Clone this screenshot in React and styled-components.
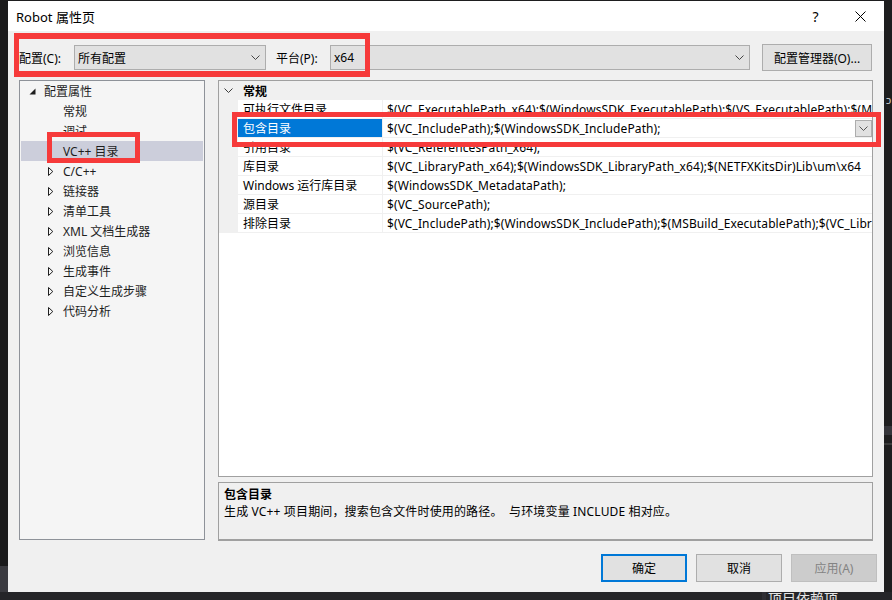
import React from "react";
import styled, { createGlobalStyle } from "styled-components";

const FONT = `"Noto Sans", "Noto Sans CJK SC", sans-serif`;

const GlobalStyle = createGlobalStyle`
  * { box-sizing: border-box; }
  html, body { margin: 0; padding: 0; background: #1e1e1e; overflow: hidden; }
`;

const Desktop = styled.div`
  width: 892px;
  height: 600px;
  display: grid;
  grid-template-columns: 8px 876px 8px;
  grid-template-rows: 592px 8px;
  background: #1e1e1f;
  font-family: ${FONT};
  font-size: 12px;
  color: #000;
`;

const LeftEdge = styled.div`
  grid-column: 1;
  grid-row: 1;
  background: linear-gradient(to bottom, #1b1b1c 0 566px, #3b3b40 566px);
`;

const RightEdge = styled.div`
  grid-column: 3;
  grid-row: 1;
  background: #1e1e1f;
  display: flex;
  flex-direction: column;
  align-items: flex-start;
  padding-top: 94px;
  overflow: hidden;
`;

const EdgeGlyph = styled.span`
  font-size: 11px;
  line-height: 12px;
  color: #cfcfcf;
  padding-left: 2px;
`;

const EdgeBand = styled.div`
  height: ${(p) => p.h}px;
  width: 100%;
  margin-top: ${(p) => p.mt}px;
  background: ${(p) => p.bg};
`;

const BottomStrip = styled.div`
  grid-column: 1 / -1;
  grid-row: 2;
  background: #252528;
  overflow: hidden;
  display: flex;
  align-items: flex-start;
  padding-left: 762px;
`;

const StripSep = styled.div`
  width: 4px;
  height: 8px;
  background: #2e2e33;
  margin-right: 2px;
`;

const StripText = styled.span`
  font-family: "Noto Sans CJK SC", sans-serif;
  font-size: 14px;
  line-height: 14px;
  color: #e6e6e6;
  margin-top: -1px;
`;

const Dialog = styled.div`
  grid-column: 2;
  grid-row: 1;
  margin-top: 1px;
  background: #f0f0f0;
  display: flex;
  flex-direction: column;
  position: relative;
`;

const TitleBar = styled.div`
  height: 30px;
  background: #fff;
  display: flex;
  align-items: center;
  padding-left: 8px;
`;

const Title = styled.span`
  flex: 1;
  font-size: 13px;
  color: #000;
`;

const CaptionButton = styled.div`
  width: 45px;
  height: 30px;
  display: flex;
  align-items: center;
  justify-content: center;
  font-size: 14px;
  color: #000;
  margin-right: ${(p) => (p.last ? 1 : 0)}px;
`;

const ConfigRow = styled.div`
  display: flex;
  align-items: center;
  height: 40px;
  padding: 13px 12px 0 11px;
`;

const FieldLabel = styled.span`
  width: ${(p) => p.w}px;
  flex: none;
  margin-left: ${(p) => p.ml || 0}px;
  white-space: nowrap;
`;

const Combo = styled.div`
  height: 25px;
  width: ${(p) => (p.w ? `${p.w}px` : "auto")};
  flex: ${(p) => (p.w ? "none" : "1")};
  background: #e1e1e1;
  border: 1px solid #adadad;
  display: flex;
  align-items: center;
  justify-content: space-between;
  padding: 0 5px 0 3px;
`;

const ActionButton = styled.div`
  width: 110px;
  height: 27px;
  margin-left: 12px;
  background: #e1e1e1;
  border: 1px solid #adadad;
  display: flex;
  align-items: center;
  justify-content: center;
  white-space: nowrap;
`;

const Main = styled.div`
  display: flex;
  height: 461px;
  margin-top: 9px;
  padding: 0 11px;
`;

const Tree = styled.div`
  width: 186px;
  flex: none;
  height: 460px;
  background: #f5f5f5;
  border: 1px solid #8e9299;
  padding: 0 1px;
`;

const TreeRow = styled.div`
  height: 20px;
  display: flex;
  align-items: center;
  padding-left: ${(p) => 8 + p.level * 19}px;
  background: ${(p) => (p.selected ? "#cccedb" : "transparent")};
  color: #1e1e1e;
  white-space: nowrap;
`;

const Toggle = styled.span`
  width: 15px;
  flex: none;
  display: flex;
  align-items: center;
`;

const PropertyArea = styled.div`
  flex: 1;
  margin-left: 13px;
  display: flex;
  flex-direction: column;
  gap: 5px;
`;

const Grid = styled.div`
  flex: 1;
  background: #fff;
  border: 1px solid #a0a0a0;
  overflow: hidden;
`;

const CategoryRow = styled.div`
  height: 19px;
  display: flex;
  align-items: center;
  background: #f0f0f0;
`;

const Gutter = styled.div`
  width: 19px;
  height: 100%;
  flex: none;
  background: #f0f0f0;
  display: flex;
  align-items: center;
  justify-content: center;
`;

const CategoryName = styled.span`
  font-weight: bold;
  padding-left: 5px;
`;

const PropRow = styled.div`
  height: 19px;
  display: grid;
  grid-template-columns: 19px 145px 1fr;
`;

const NameCell = styled.div`
  display: flex;
  align-items: center;
  padding-left: 5px;
  white-space: nowrap;
  overflow: hidden;
  border-bottom: 1px solid #f0f0f0;
  border-right: 1px solid #f0f0f0;
  background: ${(p) => (p.selected ? "#0078d7" : "#fff")};
  color: ${(p) => (p.selected ? "#fff" : "#000")};
`;

const ValueCell = styled.div`
  display: flex;
  align-items: center;
  padding-left: 4px;
  white-space: nowrap;
  overflow: hidden;
  border-bottom: 1px solid #f0f0f0;
`;

const ValueText = styled.span`
  flex: 1;
  overflow: hidden;
  letter-spacing: 0.1px;
`;

const DropButton = styled.div`
  width: 17px;
  height: 17px;
  flex: none;
  background: #e1e1e1;
  border: 1px solid #adadad;
  display: flex;
  align-items: center;
  justify-content: center;
`;

const Description = styled.div`
  height: 59px;
  flex: none;
  background: #f0f0f0;
  border: 1px solid #a0a0a0;
  border-bottom-width: 2px;
  padding: 3px 5px 0;
  line-height: 17px;
`;

const DescTitle = styled.div`
  font-weight: bold;
`;

const DescText = styled.div`
  white-space: pre;
  letter-spacing: 0.15px;
`;

const ButtonRow = styled.div`
  display: flex;
  justify-content: flex-end;
  gap: 9px;
  padding: 13px 7px 0 0;
`;

const DialogButton = styled.div`
  width: 86px;
  height: 28px;
  display: flex;
  align-items: center;
  justify-content: center;
  background: ${(p) => (p.disabled ? "#cccccc" : "#e1e1e1")};
  border: ${(p) =>
    p.primary ? "2px solid #0078d7" : p.disabled ? "1px solid #bfbfbf" : "1px solid #adadad"};
  color: ${(p) => (p.disabled ? "#838383" : "#000")};
`;

const RedBox = styled.div`
  position: absolute;
  border: 5px solid #f63a3a;
  border-top-width: ${(p) => p.bt || 5}px;
  border-bottom-width: ${(p) => p.bb || 5}px;
  pointer-events: none;
`;

const Chevron = ({ color = "#444" }) => (
  <svg width="9" height="5" viewBox="0 0 9 5">
    <polyline points="0.5,0.5 4.5,4.5 8.5,0.5" fill="none" stroke={color} strokeWidth="1" />
  </svg>
);

const Expanded = () => (
  <svg width="7" height="7" viewBox="0 0 7 7">
    <polygon points="6.5,0.5 6.5,6.5 0.5,6.5" fill="#1e1e1e" />
  </svg>
);

const Collapsed = () => (
  <svg width="6" height="9" viewBox="0 0 6 9">
    <polygon points="0.5,0.5 4.8,4.5 0.5,8.5" fill="none" stroke="#1e1e1e" strokeWidth="1" />
  </svg>
);

const CloseIcon = () => (
  <svg width="11" height="11" viewBox="0 0 11 11">
    <path d="M0.5 0.5 L10.5 10.5 M10.5 0.5 L0.5 10.5" stroke="#000" strokeWidth="1" />
  </svg>
);

const tree = [
  { label: "配置属性", level: 0, state: "open" },
  { label: "常规", level: 1 },
  { label: "调试", level: 1 },
  { label: "VC++ 目录", level: 1, selected: true },
  { label: "C/C++", level: 1, state: "closed" },
  { label: "链接器", level: 1, state: "closed" },
  { label: "清单工具", level: 1, state: "closed" },
  { label: "XML 文档生成器", level: 1, state: "closed" },
  { label: "浏览信息", level: 1, state: "closed" },
  { label: "生成事件", level: 1, state: "closed" },
  { label: "自定义生成步骤", level: 1, state: "closed" },
  { label: "代码分析", level: 1, state: "closed" },
];

const props = [
  {
    name: "可执行文件目录",
    value:
      "$(VC_ExecutablePath_x64);$(WindowsSDK_ExecutablePath);$(VS_ExecutablePath);$(MSBuild_ExecutablePath);$(FxCopDir);$(PATH);",
  },
  { name: "包含目录", value: "$(VC_IncludePath);$(WindowsSDK_IncludePath);", selected: true },
  { name: "引用目录", value: "$(VC_ReferencesPath_x64);" },
  {
    name: "库目录",
    value: "$(VC_LibraryPath_x64);$(WindowsSDK_LibraryPath_x64);$(NETFXKitsDir)Lib\\um\\x64",
  },
  { name: "Windows 运行库目录", value: "$(WindowsSDK_MetadataPath);" },
  { name: "源目录", value: "$(VC_SourcePath);" },
  {
    name: "排除目录",
    value:
      "$(VC_IncludePath);$(WindowsSDK_IncludePath);$(MSBuild_ExecutablePath);$(VC_LibraryPath_x64);",
  },
];

export default function App() {
  return (
    <>
      <GlobalStyle />
      <Desktop>
        <LeftEdge />
        <Dialog>
          <TitleBar>
            <Title>Robot 属性页</Title>
            <CaptionButton>?</CaptionButton>
            <CaptionButton last>
              <CloseIcon />
            </CaptionButton>
          </TitleBar>

          <ConfigRow>
            <FieldLabel w={55}>配置(C):</FieldLabel>
            <Combo w={192}>
              <span>所有配置</span>
              <Chevron />
            </Combo>
            <FieldLabel w={54} ml={10}>
              平台(P):
            </FieldLabel>
            <Combo>
              <span>x64</span>
              <Chevron />
            </Combo>
            <ActionButton>配置管理器(O)...</ActionButton>
          </ConfigRow>

          <Main>
            <Tree>
              {tree.map((t) => (
                <TreeRow key={t.label} level={t.level} selected={t.selected}>
                  <Toggle>
                    {t.state === "open" && <Expanded />}
                    {t.state === "closed" && <Collapsed />}
                  </Toggle>
                  <span>{t.label}</span>
                </TreeRow>
              ))}
            </Tree>

            <PropertyArea>
              <Grid>
                <CategoryRow>
                  <Gutter>
                    <Chevron color="#3c3c3c" />
                  </Gutter>
                  <CategoryName>常规</CategoryName>
                </CategoryRow>
                {props.map((p) => (
                  <PropRow key={p.name}>
                    <Gutter />
                    <NameCell selected={p.selected}>{p.name}</NameCell>
                    <ValueCell>
                      <ValueText>{p.value}</ValueText>
                      {p.selected && (
                        <DropButton>
                          <Chevron color="#555" />
                        </DropButton>
                      )}
                    </ValueCell>
                  </PropRow>
                ))}
              </Grid>
              <Description>
                <DescTitle>包含目录</DescTitle>
                <DescText>生成 VC++ 项目期间，搜索包含文件时使用的路径。  与环境变量 INCLUDE 相对应。</DescText>
              </Description>
            </PropertyArea>
          </Main>

          <ButtonRow>
            <DialogButton primary>确定</DialogButton>
            <DialogButton>取消</DialogButton>
            <DialogButton disabled>应用(A)</DialogButton>
          </ButtonRow>

          <RedBox bt={6} bb={6} style={{ left: 6, top: 32, width: 356, height: 44 }} />
          <RedBox style={{ left: 39, top: 131, width: 93, height: 31 }} />
          <RedBox style={{ left: 224, top: 111, width: 649, height: 35 }} />
        </Dialog>
        <RightEdge>
          <EdgeGlyph>ɔ</EdgeGlyph>
          <EdgeBand h={9} mt={320} bg="#35353a" />
          <EdgeBand h={2} mt={8} bg="#3a3a3a" />
        </RightEdge>
        <BottomStrip>
          <StripSep />
          <StripText>项目依赖项</StripText>
        </BottomStrip>
      </Desktop>
    </>
  );
}
